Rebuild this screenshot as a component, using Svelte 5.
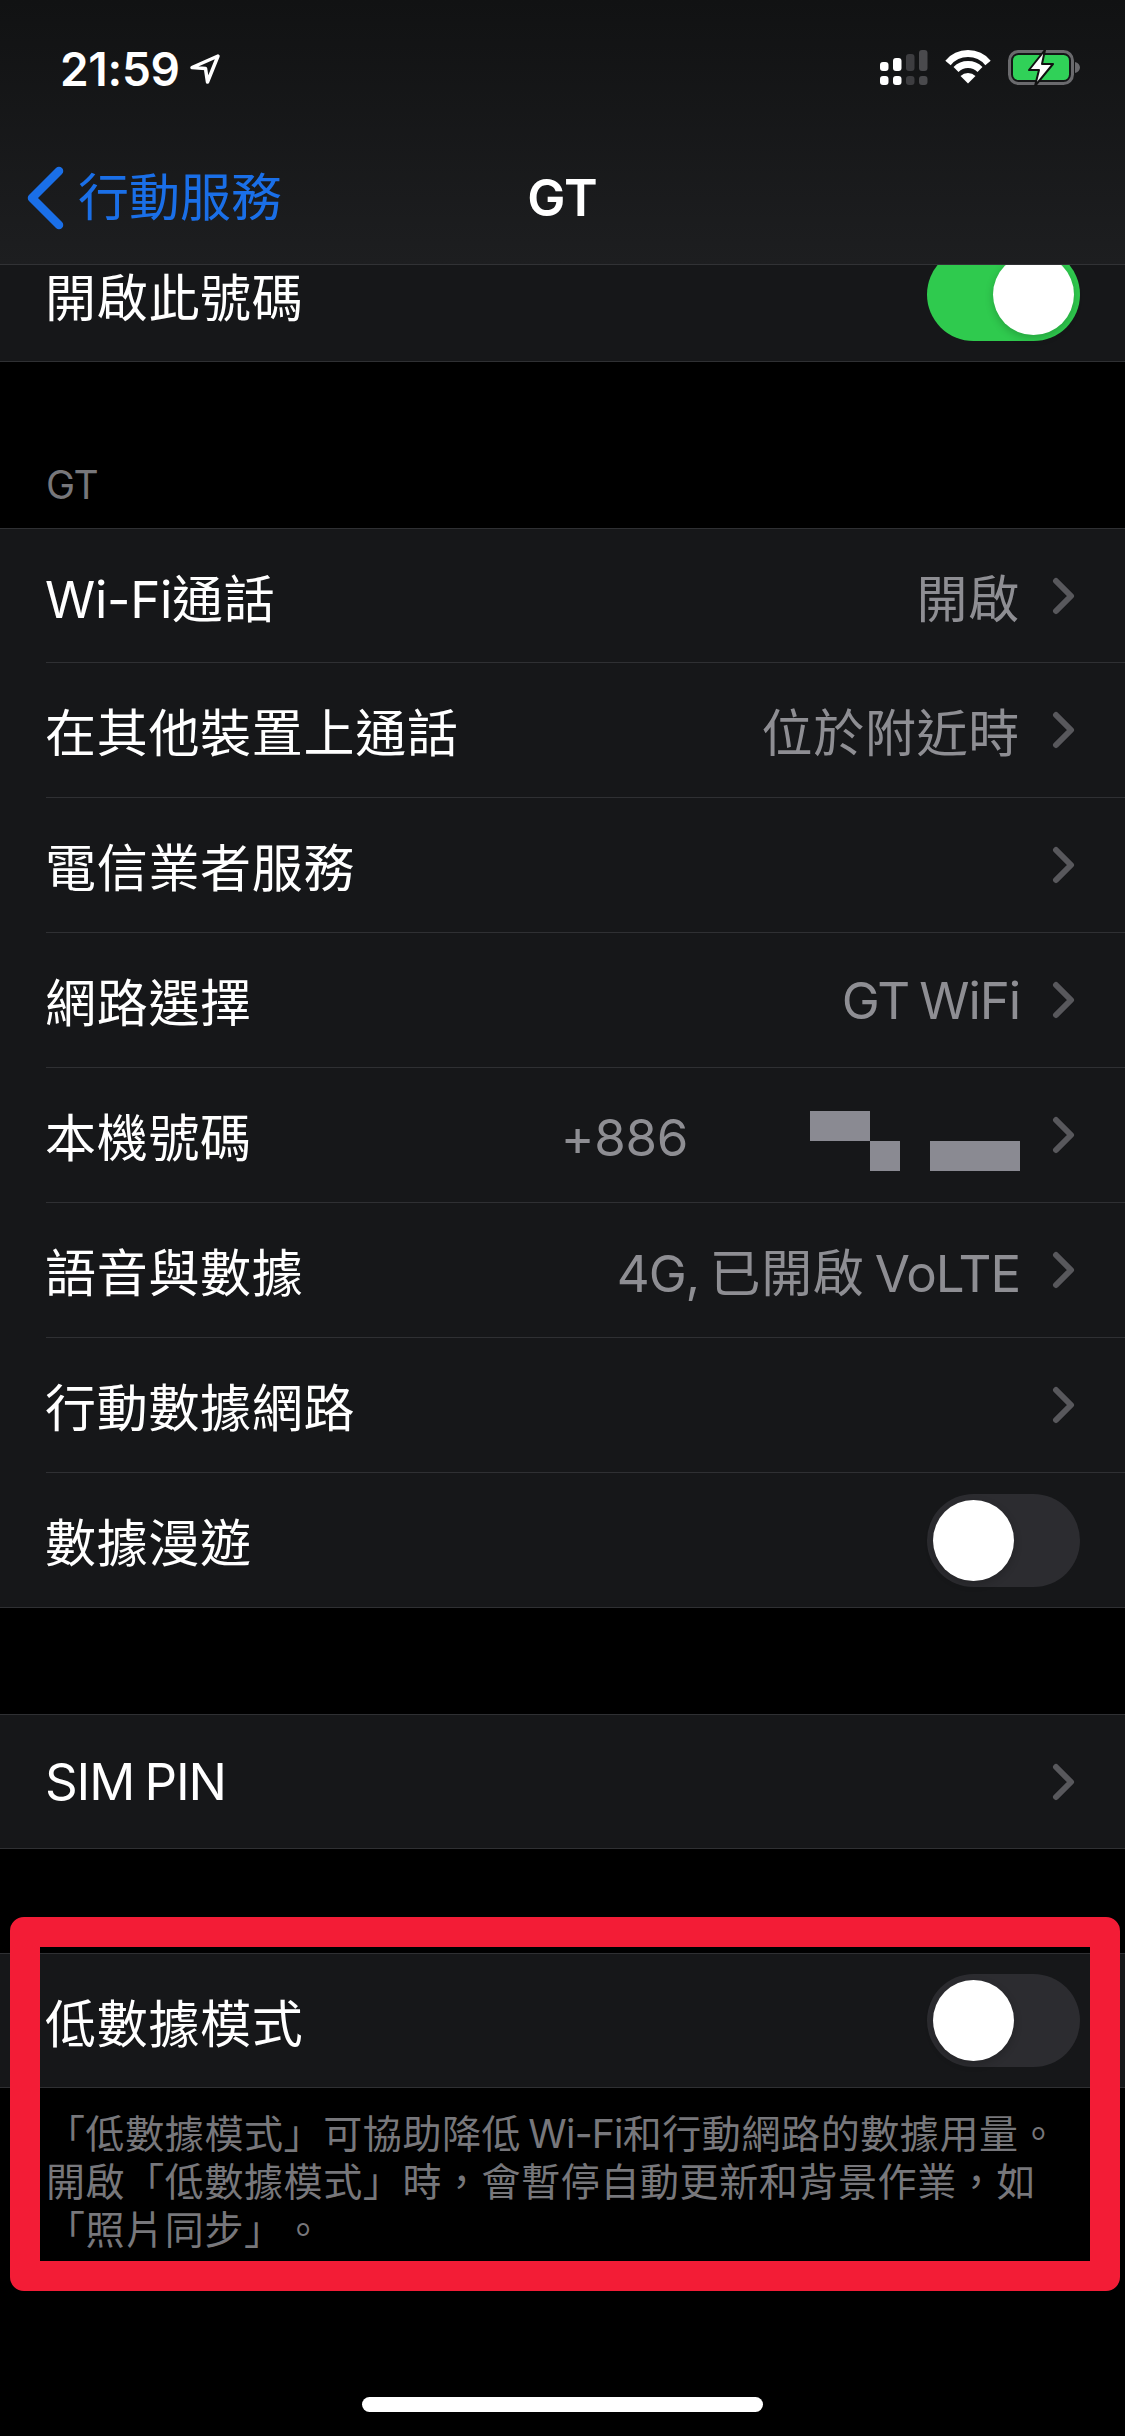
<script>
  const rows = [
    { label: 'Wi-Fi通話', value: '開啟', chevron: true, looseLatin: true },
    { label: '在其他裝置上通話', value: '位於附近時', chevron: true },
    { label: '電信業者服務', chevron: true },
    { label: '網路選擇', value: 'GT WiFi', chevron: true },
    { label: '本機號碼', value: '+886', redacted: true, chevron: true },
    { label: '語音與數據', value: '4G, 已開啟 VoLTE', chevron: true },
    { label: '行動數據網路', chevron: true },
    { label: '數據漫遊', toggle: 'off' }
  ];

  const footnote = [
    '「低數據模式」可協助降低 Wi-Fi和行動網路的數據用量。',
    '開啟「低數據模式」時\uFF0C會暫停自動更新和背景作業\uFF0C如',
    '「照片同步」。'
  ];

  // latin runs are tracked tighter than the CJK around them
  const parts = (text) => text.split(/([\x20-\x7e]+)/).filter(Boolean);
  const isLatin = (part) => /^[\x20-\x7e]/.test(part);
</script>

{#snippet mixed(text)}
  {#each parts(text) as part}<span class:latin={isLatin(part)}>{part}</span>{/each}
{/snippet}

{#snippet toggle(on)}
  <div class="toggle" class:on>
    <div class="knob"></div>
  </div>
{/snippet}

{#snippet row(item)}
  <div class="row">
    <div class="row-inner">
      <span class="label" class:loose={item.looseLatin}>{@render mixed(item.label)}</span>
      {#if item.value}
        <span class="value" class:phone={item.redacted}>{@render mixed(item.value)}</span>
      {/if}
      {#if item.redacted}
        <svg class="redacted" width="210" height="60" viewBox="0 0 210 60">
          <path d="M0 0h60v30H0zM60 30h30v30H60zM120 30h90v30h-90z" fill="#8a8a92" />
        </svg>
      {/if}
      {#if item.chevron}
        <svg class="chevron" width="24" height="40" viewBox="0 0 24 40">
          <path d="M4 5l15 15L4 35" fill="none" stroke="#58585c" stroke-width="6" stroke-linecap="round" stroke-linejoin="round" />
        </svg>
      {/if}
      {#if item.toggle}
        {@render toggle(item.toggle === 'on')}
      {/if}
    </div>
  </div>
{/snippet}

<div class="page">
  <header class="top">
    <div class="status">
      <div class="time">
        <span>21:59</span>
        <svg width="32" height="32" viewBox="0 0 32 32">
          <path d="M29 3L3 14.500l13.500 1 2 13.500z" fill="none" stroke="#fff" stroke-width="3.500" stroke-linejoin="round" />
        </svg>
      </div>
      <div class="status-icons">
        <svg width="48" height="36" viewBox="0 0 48 36">
          <rect x="0" y="12" width="8.500" height="9" rx="3" fill="#fff" />
          <rect x="13" y="8" width="8.500" height="13" rx="3" fill="#fff" />
          <rect x="26" y="4" width="8.500" height="17" rx="3" fill="#3d3d40" />
          <rect x="39" y="0" width="8.500" height="21" rx="3" fill="#4a4a4d" />
          <rect x="0" y="26" width="8.500" height="9" rx="3" fill="#fff" />
          <rect x="13" y="26" width="8.500" height="9" rx="3" fill="#fff" />
          <rect x="26" y="26" width="8.500" height="9" rx="3" fill="#3d3d40" />
          <rect x="39" y="26" width="8.500" height="9" rx="3" fill="#4a4a4d" />
        </svg>
        <svg class="wifi" width="46" height="34" viewBox="0 0 46 34">
          <path d="M23 33.500L15.500 26a11 11 0 0 1 15 0z" fill="#fff" />
          <path d="M11 19.500a17 17 0 0 1 24 0" fill="none" stroke="#fff" stroke-width="7" />
          <path d="M3 12.900a26 26 0 0 1 40 0" fill="none" stroke="#fff" stroke-width="7" />
        </svg>
        <svg class="battery" width="74" height="36" viewBox="0 0 74 36">
          <rect x="1.500" y="1.500" width="63" height="32" rx="9" fill="none" stroke="#6a6a6d" stroke-width="3" />
          <rect x="5" y="5" width="56" height="25" rx="5.500" fill="#30d158" />
          <path d="M67 12c3 .5 5 3 5 5.500s-2 5-5 5.500z" fill="#6a6a6d" />
          <path d="M37 0L21 20h10l-4 16 18-22H34z" fill="#fff" stroke="#111" stroke-width="2" stroke-linejoin="round" />
        </svg>
      </div>
    </div>
    <nav class="nav">
      <div class="back">
        <svg width="38" height="64" viewBox="0 0 38 64">
          <path d="M33 5L6 32l27 27" fill="none" stroke="#1a6fe8" stroke-width="8.500" stroke-linecap="round" stroke-linejoin="round" />
        </svg>
        <span>行動服務</span>
      </div>
      <div class="title">GT</div>
    </nav>
  </header>

  <section class="group clipped">
    <div class="row shifted">
      <div class="row-inner">
        <span class="label">開啟此號碼</span>
        {@render toggle(true)}
      </div>
    </div>
  </section>

  <div class="section-title">GT</div>

  <section class="group">
    {#each rows as item}
      {@render row(item)}
    {/each}
  </section>

  <section class="group sim">
    {@render row({ label: 'SIM PIN', chevron: true })}
  </section>

  <section class="group low-data">
    {@render row({ label: '低數據模式', toggle: 'off' })}
  </section>
  <div class="footnote">
    {#each footnote as line}
      <div class="line">{@render mixed(line)}</div>
    {/each}
  </div>

  <div class="home"></div>
  <div class="highlight"></div>
</div>

<style>
  :global(body) {
    background: #000;
  }

  .page {
    position: relative;
    width: 1125px;
    height: 2436px;
    overflow: hidden;
    display: flex;
    flex-direction: column;
    background: #000;
    color: #fff;
    font-family: Inter, "Noto Sans CJK TC", sans-serif;
  }

  .top {
    height: 265px;
    box-sizing: border-box;
    flex-shrink: 0;
    border-bottom: 1px solid #313235;
    background: linear-gradient(#111213, #1d1e20);
  }

  .status {
    height: 132px;
    box-sizing: border-box;
    padding: 48px 43px 0 60px;
    display: flex;
    justify-content: space-between;
    align-items: flex-start;
  }

  .time {
    display: flex;
    align-items: center;
    gap: 9px;
    font-size: 46px;
    font-weight: 600;
    line-height: 42px;
    letter-spacing: -0.3px;
  }

  .status-icons {
    display: flex;
    align-items: flex-start;
    gap: 17px;
    padding-top: 2px;
  }

  .nav {
    position: relative;
    height: 132px;
    display: flex;
    align-items: center;
    justify-content: center;
  }

  .back {
    position: absolute;
    left: 26px;
    top: 34px;
    display: flex;
    align-items: center;
    gap: 14px;
    font-size: 51px;
    line-height: 64px;
    color: #1a6fe8;
  }

  .title {
    font-size: 51px;
    font-weight: 600;
    line-height: 60px;
    margin-top: -1px;
  }

  .group {
    flex-shrink: 0;
    background: #161719;
    border-top: 1px solid #2f3033;
    border-bottom: 1px solid #2f3033;
  }

  .clipped {
    height: 97px;
    box-sizing: border-box;
    overflow: hidden;
    border-top: 0;
  }

  .row {
    height: 135px;
    box-sizing: border-box;
    padding-left: 46px;
  }

  .row:first-child,
  .row:last-child {
    height: 134px;
  }

  .row:only-child {
    height: 133px;
  }

  .row.shifted {
    height: 135px;
    margin-top: -38px;
  }

  .row-inner {
    height: 100%;
    box-sizing: border-box;
    padding-right: 45px;
    display: flex;
    align-items: center;
    border-bottom: 1px solid #2f3033;
    font-size: 51px;
    letter-spacing: 0.7px;
  }

  .row:last-child .row-inner {
    border-bottom: 0;
  }

  .label {
    margin-left: -1px;
    margin-right: auto;
    white-space: nowrap;
  }

  .value {
    color: #8e8e93;
    white-space: nowrap;
  }

  .value.phone {
    margin-top: 4px;
  }

  .latin {
    letter-spacing: -1.1px;
    word-spacing: -3px;
  }

  .label.loose .latin,
  .value.phone .latin {
    letter-spacing: -0.3px;
  }

  .redacted {
    margin-left: 122px;
    margin-top: 12px;
    flex-shrink: 0;
  }

  .chevron {
    margin-left: 32px;
    margin-right: 4px;
    flex-shrink: 0;
  }

  .toggle {
    width: 153px;
    height: 93px;
    box-sizing: border-box;
    padding: 6px;
    border-radius: 47px;
    background: #2c2c30;
    display: flex;
    flex-shrink: 0;
  }

  .toggle.on {
    justify-content: flex-end;
    background: #2fca4e;
  }

  .knob {
    width: 81px;
    height: 81px;
    border-radius: 50%;
    background: #fff;
    box-shadow: 0 3px 8px rgba(0, 0, 0, 0.2);
  }

  .section-title {
    height: 166px;
    box-sizing: border-box;
    padding: 99px 46px 0;
    font-size: 39px;
    line-height: 48px;
    letter-spacing: -0.5px;
    color: #77777b;
    flex-shrink: 0;
  }

  .sim {
    margin-top: 106px;
  }

  .low-data {
    margin-top: 104px;
  }

  .footnote {
    padding: 22px 46px 0;
    font-size: 39px;
    line-height: 48px;
    letter-spacing: 0.6px;
    color: #77777b;
    text-spacing-trim: space-all;
  }

  .line {
    white-space: nowrap;
  }

  .footnote .latin {
    letter-spacing: -0.8px;
  }

  .home {
    position: absolute;
    left: 362px;
    top: 2397px;
    width: 401px;
    height: 15px;
    border-radius: 8px;
    background: #fff;
  }

  .highlight {
    position: absolute;
    left: 10px;
    top: 1917px;
    width: 1050px;
    height: 314px;
    border: 30px solid #f31c36;
    border-radius: 14px;
  }
</style>
